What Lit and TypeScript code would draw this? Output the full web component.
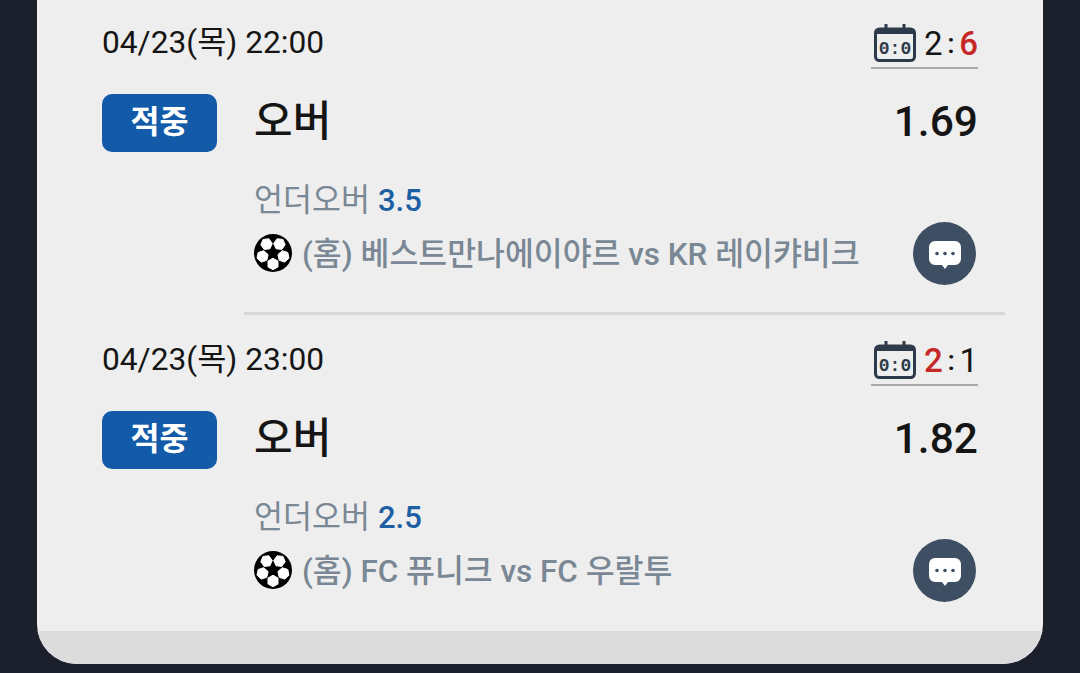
import { LitElement, html, css, svg } from 'lit';
import { customElement } from 'lit/decorators.js';

interface Pick {
  date: string;
  home: string;
  away: string;
  odds: string;
  line: string;
  match: string;
}

const picks: Pick[] = [
  { date: '04/23(목) 22:00', home: '2', away: '6', odds: '1.69', line: '3.5', match: '(홈) 베스트만나에이야르 vs KR 레이캬비크' },
  { date: '04/23(목) 23:00', home: '2', away: '1', odds: '1.82', line: '2.5', match: '(홈) FC 퓨니크 vs FC 우랄투' },
];

// white patches around the centre pentagon of the ball
const patch = (deg: number) => {
  const a = (deg * Math.PI) / 180;
  const cx = 19 + Math.cos(a) * 11;
  const cy = 19 + Math.sin(a) * 11;
  const pts = [0, 60, 120, 180, 240, 300].map((d) => {
    const b = ((d + deg) * Math.PI) / 180;
    return `${(cx + Math.cos(b) * 5.8).toFixed(1)},${(cy + Math.sin(b) * 5.8).toFixed(1)}`;
  });
  return svg`<polygon points=${pts.join(' ')} fill="#fff" stroke="#fff" stroke-width="1" stroke-linejoin="round" />`;
};

const ballIcon = html`<svg class="ball" width="38" height="38" viewBox="0 0 38 38">
  <circle cx="19" cy="19" r="19" fill="#000" />
  ${[-126, -54, 18, 90, 162].map(patch)}
</svg>`;

const calendarIcon = html`<svg class="cal" width="42" height="38" viewBox="0 0 42 38" fill="none">
  <path d="M12 0v6M30 0v6" stroke="#2d3a4a" stroke-width="3" />
  <rect x="1.5" y="5" width="39" height="31.5" rx="4" stroke="#2d3a4a" stroke-width="3" />
  <rect x="1.5" y="5" width="39" height="5" fill="#2d3a4a" />
  <text x="21" y="29.5" text-anchor="middle" class="cal-text">0:0</text>
</svg>`;

const chatIcon = html`<svg width="32" height="29" viewBox="0 0 32 29">
  <path d="M6 0h20a6 6 0 0 1 6 6v12a6 6 0 0 1-6 6h-7l-3 4-3-4H6a6 6 0 0 1-6-6V6a6 6 0 0 1 6-6z" fill="#fff" />
  <circle cx="8" cy="12.5" r="1.8" fill="#3f4f63" />
  <circle cx="16" cy="12.5" r="1.8" fill="#3f4f63" />
  <circle cx="24" cy="12.5" r="1.8" fill="#3f4f63" />
</svg>`;

@customElement('app-root')
export class AppRoot extends LitElement {
  static styles = css`
    :host {
      display: block;
      height: 673px;
      overflow: hidden;
      background: #1b202c;
      font-family: Roboto, 'Noto Sans CJK KR', sans-serif;
      color: #151515;
    }

    .card {
      margin: 0 37px;
      background: #eeeeee;
      border-radius: 0 0 40px 40px;
      overflow: hidden;
    }

    .item {
      padding: 14px 65px 27px;
    }
    .divider + .item {
      padding-top: 16px;
    }

    .divider {
      height: 3px;
      margin: 0 38px 0 207px;
      background: #d8d8d8;
    }

    .head {
      height: 60px;
      display: flex;
      justify-content: space-between;
    }
    .date {
      font-size: 31.7px;
      line-height: 40px;
      padding-top: 9px;
    }

    .score {
      width: 107px;
      height: 55px;
      box-sizing: border-box;
      padding: 0 0 0 3px;
      border-bottom: 2px solid #aaaaaa;
      display: flex;
      align-items: center;
      font-size: 33px;
      line-height: 40px;
    }
    .cal {
      margin-right: 8px;
      margin-top: 4px;
    }
    .cal-text {
      font-family: 'Liberation Mono', monospace;
      font-size: 18px;
      font-weight: 700;
      fill: #2d3a4a;
    }
    .colon {
      flex: 1;
      text-align: center;
      font-size: 28px;
      font-weight: 500;
    }
    .score span {
      margin-top: 7px;
    }
    .red {
      color: #c62828;
      font-weight: 500;
    }

    .main {
      margin-top: 20px;
      display: flex;
      gap: 37px;
    }
    .badge {
      width: 115px;
      height: 58px;
      flex: none;
      border-radius: 10px;
      background: #135ba8;
      color: #fff;
      font-size: 31.5px;
      line-height: 40px;
      font-weight: 700;
      display: flex;
      align-items: center;
      justify-content: center;
      padding-bottom: 1px;
      box-sizing: border-box;
    }
    .body {
      flex: 1;
      min-width: 0;
    }

    .top {
      height: 58px;
      display: flex;
      align-items: center;
      justify-content: space-between;
    }
    .pick {
      font-size: 42px;
      line-height: 50px;
      font-weight: 500;
      padding-bottom: 2px;
    }
    .odds {
      font-size: 42.5px;
      line-height: 50px;
      font-weight: 500;
      padding-bottom: 2px;
    }

    .info {
      margin-top: 20px;
      display: flex;
      justify-content: space-between;
      align-items: flex-end;
    }
    .market {
      height: 56px;
      box-sizing: border-box;
      padding-top: 2px;
      display: flex;
      align-items: center;
      gap: 8px;
      font-size: 31.5px;
      line-height: 40px;
      color: #7a8794;
    }
    .market b {
      font-weight: 500;
      color: #1d5fa3;
      font-size: 31px;
    }
    .match {
      height: 50px;
      margin-bottom: 7px;
      display: flex;
      align-items: center;
      gap: 10px;
      font-size: 31.4px;
      font-weight: 500;
      color: #7a8794;
      white-space: nowrap;
    }
    .match span {
      line-height: 40px;
      padding-top: 3px;
    }
    .ball {
      flex: none;
    }

    .chat {
      width: 63px;
      height: 63px;
      margin-right: 2px;
      flex: none;
      border-radius: 50%;
      background: #3f4f63;
      display: flex;
      align-items: center;
      justify-content: center;
      padding-top: 3px;
      box-sizing: border-box;
    }

    .footer {
      height: 33px;
      margin-top: 2px;
      background: #dcdcdc;
    }
  `;

  renderPick(p: Pick) {
    const homeWin = Number(p.home) > Number(p.away);
    return html`<div class="item">
      <div class="head">
        <div class="date">${p.date}</div>
        <div class="score">
          ${calendarIcon}
          <span class=${homeWin ? 'red' : ''}>${p.home}</span>
          <span class="colon">:</span>
          <span class=${homeWin ? '' : 'red'}>${p.away}</span>
        </div>
      </div>
      <div class="main">
        <div class="badge">적중</div>
        <div class="body">
          <div class="top">
            <div class="pick">오버</div>
            <div class="odds">${p.odds}</div>
          </div>
          <div class="info">
            <div>
              <div class="market">언더오버 <b>${p.line}</b></div>
              <div class="match">${ballIcon}<span>${p.match}</span></div>
            </div>
            <div class="chat">${chatIcon}</div>
          </div>
        </div>
      </div>
    </div>`;
  }

  render() {
    return html`<div class="card">
      ${this.renderPick(picks[0])}
      <div class="divider"></div>
      ${this.renderPick(picks[1])}
      <div class="footer"></div>
    </div>`;
  }
}
